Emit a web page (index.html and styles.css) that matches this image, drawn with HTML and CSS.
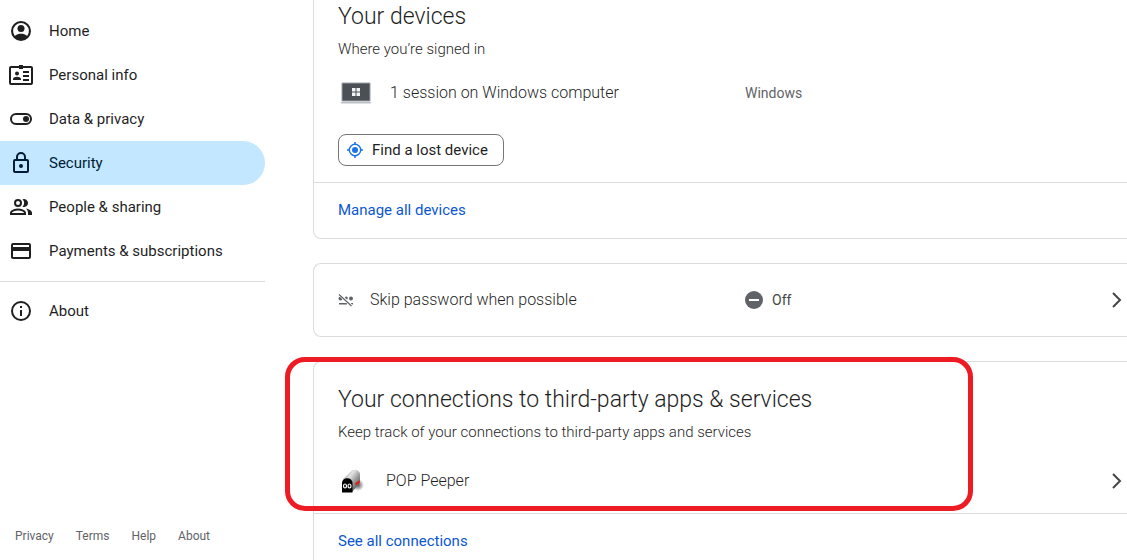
FILE: index.html
```html
<!DOCTYPE html>
<html lang="en">
<head>
    <meta charset="UTF-8">
    <meta name="viewport" content="width=device-width, initial-scale=1">
    <title>Security</title>
    <link rel="stylesheet" href="styles.css">
</head>
<body>
<div class="page">
    <aside class="sidebar">
        <nav class="menu">
            <a class="menu-item" href="#">
                <svg class="menu-icon" viewBox="0 0 24 24"><path fill-rule="evenodd" d="M12 2a10 10 0 1 0 0 20 10 10 0 0 0 0-20zM5.8 16.9A7.900 7.900 0 1 1 18.200 16.900C16.700 15.200 14 14.700 12 14.700s-4.700.5-6.200 2.200z"/><circle cx="12" cy="9.500" r="3.500"/></svg>
                <span>Home</span>
            </a>
            <a class="menu-item" href="#">
                <svg class="menu-icon" viewBox="0 0 24 24"><rect x="1" y="4" width="22" height="17" rx="1" fill="none" stroke="currentColor" stroke-width="2"/><path d="M10 2h4v4h-4zM4 17v-1c0-1.500 2.500-2.200 4-2.200s4 .7 4 2.200v1zM14 8h6v2h-6zM14 12h6v2h-6zM14 16h6v2h-6z"/><circle cx="8" cy="10.500" r="2"/></svg>
                <span>Personal info</span>
            </a>
            <a class="menu-item" href="#">
                <svg class="menu-icon" viewBox="0 0 24 24"><rect x="2" y="7" width="20" height="10" rx="5" fill="none" stroke="currentColor" stroke-width="2"/><circle cx="17" cy="12" r="3"/></svg>
                <span>Data &amp; privacy</span>
            </a>
            <a class="menu-item selected" href="#">
                <svg class="menu-icon" viewBox="0 0 24 24"><path fill-rule="evenodd" d="M18 8h-1V6A5 5 0 0 0 7 6v2H6a2 2 0 0 0-2 2v10c0 1.100.9 2 2 2h12a2 2 0 0 0 2-2V10a2 2 0 0 0-2-2zM9 6a3 3 0 0 1 6 0v2H9zm9 14H6V10h12z"/><circle cx="12" cy="15" r="2"/></svg>
                <span>Security</span>
            </a>
            <a class="menu-item" href="#">
                <svg class="menu-icon" viewBox="0 0 24 24"><circle cx="9" cy="8" r="3" fill="none" stroke="currentColor" stroke-width="2"/><path d="M2 19v-1c0-2.500 4.500-3.500 7-3.500s7 1 7 3.500v1z" fill="none" stroke="currentColor" stroke-width="2"/><path d="M13.500 11.700a5 5 0 0 0 0-7.400 4 4 0 1 1 0 7.400zM16.700 13.400c3 .4 6.300 1.900 6.300 4.300V20h-4v-2.300c0-1.900-.9-3.300-2.300-4.300z"/></svg>
                <span>People &amp; sharing</span>
            </a>
            <a class="menu-item" href="#">
                <svg class="menu-icon" viewBox="0 0 24 24"><path fill-rule="evenodd" d="M20 4H4a2 2 0 0 0-2 2v12c0 1.100.9 2 2 2h16a2 2 0 0 0 2-2V6a2 2 0 0 0-2-2zm0 14H4v-6h16zm0-10H4V6h16z"/></svg>
                <span>Payments &amp; subscriptions</span>
            </a>
            <hr class="menu-line">
            <a class="menu-item" href="#">
                <svg class="menu-icon" viewBox="0 0 24 24"><circle cx="12" cy="12" r="9" fill="none" stroke="currentColor" stroke-width="2"/><path d="M11 7h2v2h-2zM11 11h2v6h-2z"/></svg>
                <span>About</span>
            </a>
        </nav>
        <footer class="links">
            <a href="#">Privacy</a>
            <a href="#">Terms</a>
            <a href="#">Help</a>
            <a href="#">About</a>
        </footer>
    </aside>

    <main class="content">
        <section class="card card-first">
            <div class="card-body">
                <h2>Your devices</h2>
                <p class="desc">Where you’re signed in</p>
                <div class="row">
                    <div class="row-name">
                        <svg class="device-icon" viewBox="0 0 36 24"><path d="M4 2h28v18H4z" fill="#4b5056" stroke="#9aa0a6" stroke-width="1"/><path d="M14 7h3.500v3.500H14zM18.500 7H22v3.500h-3.500zM14 11.500h3.500V15H14zM18.500 11.500H22V15h-3.500z" fill="#f1f3f4"/><path d="M3 21h30v1.500H3z" fill="#bdc1c6"/></svg>
                        <span>1 session on Windows computer</span>
                    </div>
                    <span class="system">Windows</span>
                </div>
                <button class="find" type="button">
                    <svg class="find-icon" viewBox="0 0 16 16"><circle cx="8" cy="8" r="5.700" fill="none" stroke="currentColor" stroke-width="1.400"/><circle cx="8" cy="8" r="3" fill="currentColor"/><path d="M8 0v2.500M8 13.500V16M0 8h2.500M13.500 8H16" stroke="currentColor" stroke-width="1.500"/></svg>
                    Find a lost device
                </button>
            </div>
            <a class="card-more" href="#">Manage all devices</a>
        </section>

        <section class="card">
            <a class="row skip" href="#">
                <span class="row-name">
                    <svg class="skip-icon" viewBox="0 0 16 16"><circle cx="2.500" cy="6.500" r="2"/><circle cx="8.300" cy="6" r="1.500"/><circle cx="13" cy="6.500" r="2"/><path d="M1 11h8v1.500H1zM12.500 11H15v1.500h-1.500z"/><path d="M1.500 2.500l12 11.500" fill="none" stroke="#fff" stroke-width="3"/><path d="M1 2.500L13.500 14" fill="none" stroke="currentColor" stroke-width="1.200"/></svg>
                    <span>Skip password when possible</span>
                </span>
                <span class="state">
                    <svg class="state-icon" viewBox="0 0 18 18"><circle cx="9" cy="9" r="9" fill="#5f6368"/><path d="M4 8h10v2H4z" fill="#fff"/></svg>
                    Off
                </span>
                <svg class="arrow" viewBox="0 0 10 16"><path d="M1 1l7 7-7 7"/></svg>
            </a>
        </section>

        <section class="card">
            <div class="card-body">
                <h2>Your connections to third-party apps &amp; services</h2>
                <p class="desc">Keep track of your connections to third-party apps and services</p>
                <a class="row app" href="#">
                    <span class="row-name">
                        <svg class="app-icon" viewBox="0 0 24 24">
                            <defs>
                                <linearGradient id="metal" x1="0" y1="0" x2="1" y2="1">
                                    <stop offset="0" stop-color="#777"/>
                                    <stop offset=".35" stop-color="#e4e4e4"/>
                                    <stop offset=".6" stop-color="#999"/>
                                    <stop offset="1" stop-color="#333"/>
                                </linearGradient>
                                <radialGradient id="shade">
                                    <stop offset="0" stop-color="#555"/>
                                    <stop offset="1" stop-color="#555" stop-opacity="0"/>
                                </radialGradient>
                            </defs>
                            <ellipse cx="18" cy="16" rx="6" ry="6" fill="url(#shade)"/>
                            <path d="M3 10L12 1.500c3-2 8-.5 8 4V14l-8 9z" fill="url(#metal)"/>
                            <path d="M2 23.500V14c0-6.500 10.500-6.500 10.500 0v9.500z" fill="#000"/>
                            <path d="M14.500 15l5-4v3l-3 2z" fill="#e61919"/>
                            <ellipse cx="5" cy="17" rx="1.500" ry="2" fill="#000" stroke="#fff" stroke-width="1.200"/>
                            <ellipse cx="9.500" cy="17" rx="1.500" ry="2" fill="#000" stroke="#fff" stroke-width="1.200"/>
                        </svg>
                        <span>POP Peeper</span>
                    </span>
                    <svg class="arrow" viewBox="0 0 10 16"><path d="M1 1l7 7-7 7"/></svg>
                </a>
            </div>
            <a class="card-more" href="#">See all connections</a>
            <div class="marker"></div>
        </section>
    </main>
</div>
</body>
</html>
```
FILE: styles.css
```css
*{
    margin: 0;
    padding: 0;
    box-sizing: border-box;
}
body{
    font-family: Roboto, "Liberation Sans", sans-serif;
    font-size: 15px;
    line-height: 20px;
    color: #1f1f1f;
    background: #fff;
}
a{
    color: inherit;
    text-decoration: none;
}
svg{
    display: block;
    flex: none;
    fill: currentColor;
}
.page{
    display: flex;
    gap: 48px;
    height: 100vh;
    overflow: hidden;
}

/* sidebar */
.sidebar{
    display: flex;
    flex-direction: column;
    justify-content: space-between;
    flex: none;
    width: 265px;
    padding: 9px 0 14px;
}
.menu-item{
    display: flex;
    align-items: center;
    gap: 16px;
    height: 44px;
    padding-left: 9px;
    border-radius: 0 22px 22px 0;
}
.menu-icon{
    width: 24px;
    height: 24px;
}
.selected{
    background: #c2e7ff;
    color: #001d35;
}
.menu-line{
    margin: 8px 0 7px;
    border: 0;
    border-top: 1px solid #dadce0;
}
.links{
    display: flex;
    gap: 22px;
    padding-left: 15px;
    font-size: 12px;
    color: #5f6368;
}

/* cards */
.content{
    display: flex;
    flex-direction: column;
    flex: 1;
    gap: 24px;
    min-width: 0;
}
.card{
    position: relative;
    flex: none;
    border: 1px solid #dadce0;
    border-right: 0;
    border-radius: 8px 0 0 8px;
}
.card-first{
    border-top: 0;
    border-top-left-radius: 0;
}
.card-body{
    padding: 24px 0 16px 24px;
}
.card-first .card-body{
    padding-top: 3px;
}
h2{
    font-size: 23px;
    font-weight: 300;
    line-height: 28px;
}
.desc{
    margin-top: 8px;
    font-weight: 300;
    color: #1f1f1f;
}
.row{
    display: flex;
    align-items: center;
    height: 32px;
    margin-top: 18px;
    padding-right: 5px;
}
.row-name{
    display: flex;
    align-items: center;
    gap: 16px;
    flex: 0 0 407px;
    font-size: 16px;
    font-weight: 300;
}
.system{
    font-size: 14px;
    color: #5f6368;
}
.device-icon{
    width: 36px;
    height: 24px;
}
.app{
    margin-top: 23px;
}
.app .row-name{
    gap: 22px;
}
.app-icon{
    width: 24px;
    height: 24px;
    margin-left: 2px;
}
.find{
    display: flex;
    align-items: center;
    gap: 9px;
    height: 32px;
    margin-top: 25px;
    padding: 0 15px 0 8px;
    border: 1px solid #747775;
    border-radius: 8px;
    background: #fff;
    color: #1f1f1f;
    font: inherit;
}
.find-icon{
    width: 16px;
    height: 16px;
    color: #1a73e8;
}
.card-more{
    display: block;
    padding: 17px 24px 18px;
    border-top: 1px solid #dadce0;
    color: #0b57d0;
}
.skip{
    height: 72px;
    margin: 0;
    padding-left: 24px;
}
.skip-icon{
    width: 16px;
    height: 16px;
    color: #5f6368;
}
.state{
    display: flex;
    align-items: center;
    gap: 9px;
    font-size: 14px;
    color: #444746;
}
.state-icon{
    width: 18px;
    height: 18px;
}
.arrow{
    width: 10px;
    height: 16px;
    margin-left: auto;
    fill: none;
    stroke: #444746;
    stroke-width: 2;
}

/* red frame round the third-party section */
.marker{
    position: absolute;
    top: -5px;
    left: -29px;
    right: 154px;
    height: 154px;
    border: 5px solid #ed1c24;
    border-radius: 20px;
    pointer-events: none;
}
```
